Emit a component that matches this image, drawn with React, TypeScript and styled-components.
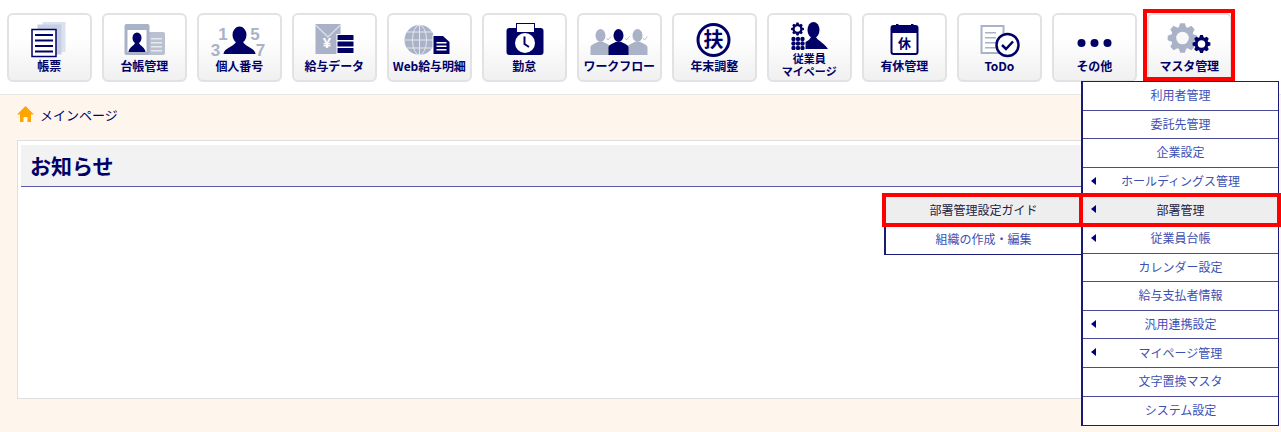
import React from "react";
import styled, { createGlobalStyle } from "styled-components";

const NAVY = "#000066";
const GREY = "#a9b2c6";

const GlobalStyle = createGlobalStyle`
    html, body {
        margin: 0;
        padding: 0;
        background: #fff;
        font-family: "Noto Sans CJK JP", "Liberation Sans", sans-serif;
    }
`

const Page = styled.div`
    position: relative;
    width: 1281px;
    height: 432px;
    overflow: hidden;
    display: flex;
    flex-direction: column;
`

const Toolbar = styled.nav`
    height: 95px;
    box-sizing: border-box;
    padding: 13px 0 0 7px;
    display: flex;
    gap: 10.5px;
    background: #fff;
    border-bottom: 1px solid #e8e4e0;
    flex-shrink: 0;
`

const ToolButton = styled.div`
    position: relative;
    width: 84.5px;
    height: 69px;
    box-sizing: border-box;
    padding-top: 5px;
    display: flex;
    flex-direction: column;
    align-items: center;
    border: 2px solid #e2e2e2;
    border-radius: 6px;
    background: linear-gradient(#fff 35%, #f0f0f0);
`

const ToolLabel = styled.div<{ $small?: boolean }>`
    color: ${NAVY};
    font-weight: 700;
    white-space: pre-line;
    text-align: center;
    font-size: ${props => (props.$small ? "11px" : "12px")};
    line-height: 13px;
    letter-spacing: ${props => (props.$small ? "0" : "-0.1px")};
    margin-top: ${props => (props.$small ? "2px" : "-1px")};
`

const RedMark = styled.div<{ $top: number; $right: number; $bottom: number; $left: number }>`
    position: absolute;
    top: ${props => props.$top}px;
    left: ${props => props.$left}px;
    right: ${props => props.$right}px;
    bottom: ${props => props.$bottom}px;
    border: 4px solid #f00;
    pointer-events: none;
    z-index: 3;
`

const Content = styled.main`
    flex: 1;
    background: #fef6ed;
    padding: 0 17px 33px;
    display: flex;
    flex-direction: column;
`

const Breadcrumb = styled.div`
    height: 39px;
    margin-bottom: 6px;
    display: flex;
    align-items: center;
    gap: 6px;
    color: ${NAVY};
    font-size: 13px;
`

const NoticeCard = styled.section`
    flex: 1;
    box-sizing: border-box;
    background: #fff;
    border: 1px solid #dfdfdf;
    padding: 4px 3px;
`

const NoticeTitle = styled.h2`
    margin: 0;
    height: 42px;
    box-sizing: border-box;
    padding: 0 0 2px 9px;
    display: flex;
    align-items: center;
    background: #f2f2f2;
    border-bottom: 1px solid #5c5cab;
    color: ${NAVY};
    font-size: 21px;
    font-weight: 700;
`

const Menu = styled.ul<{ $sub?: boolean }>`
    list-style: none;
    margin: 0;
    padding: 0;
    background: #fff;
    box-sizing: border-box;
    position: absolute;
    z-index: 2;
    width: ${props => (props.$sub ? "197px" : "198px")};
    border-left: 2px solid #1a1a78;
    border-right: ${props => (props.$sub ? "0" : "1px solid #1a1a78")};
    border-top: ${props => (props.$sub ? "0" : "1px solid #1a1a78")};
    border-bottom: 1px solid #1a1a78;
    ${props => (props.$sub ? "top: 0; right: calc(100% + 2px);" : "top: 81px; left: 1081px;")}
`

const MenuRow = styled.li<{ $active?: boolean }>`
    position: relative;
    height: 28.6px;
    box-sizing: border-box;
    padding-bottom: 2px;
    display: flex;
    align-items: center;
    justify-content: center;
    font-size: 12px;
    color: ${props => (props.$active ? "#222244" : "#3c50b4")};
    background: ${props => (props.$active ? "#eeeeee" : "#fff")};
    &:not(:last-child) {
        border-bottom: 1px solid #4a4a98;
    }
`

const Caret = styled.span`
    position: absolute;
    left: 8px;
    top: 50%;
    margin-top: -5px;
    width: 0;
    height: 0;
    border-top: 4px solid transparent;
    border-bottom: 4px solid transparent;
    border-right: 5px solid #000080;
`

const Gear: React.FC<{ cx: number; cy: number; r: number; teeth: number; fill: string; hole: string }> = props => {
    const points: string[] = [];
    const inner = props.r * 0.76;
    const step = (Math.PI * 2) / props.teeth;
    for (let i = 0; i < props.teeth; i++) {
        const a = i * step;
        const at = (rad: number, off: number) =>
            `${(props.cx + rad * Math.cos(a + off)).toFixed(2)},${(props.cy + rad * Math.sin(a + off)).toFixed(2)}`;
        points.push(at(inner, -step * 0.42), at(props.r, -step * 0.2), at(props.r, step * 0.2), at(inner, step * 0.42));
    }
    return (<>
        <polygon points={points.join(" ")} fill={props.fill}/>
        <circle cx={props.cx} cy={props.cy} r={props.r * 0.42} fill={props.hole}/>
    </>)
}

const Person: React.FC<{ x: number; fill: string }> = props => (<g fill={props.fill}>
    <ellipse cx={props.x} cy={15.5} rx={5} ry={6.5}/>
    <path d={`M${props.x - 10} 35 V27.5 C${props.x - 10} 24.5 ${props.x - 6} 24 ${props.x - 3} 22 H${props.x + 3} C${props.x + 6} 24 ${props.x + 10} 24.5 ${props.x + 10} 27.5 V35Z`}/>
</g>)

const Icon = styled.svg`
    display: block;
    flex-shrink: 0;
`

const Glyph: React.FC<{ h?: number; children: React.ReactNode }> = ({ h = 40, children }) => (
    <Icon width={60} height={h} viewBox={`0 0 60 ${h}`}>{children}</Icon>
)

const icons: Record<string, React.ReactNode> = {
    report: <Glyph>
        <rect x={23.5} y={2} width={23} height={30} fill="#dbe1ee"/>
        <rect x={18.5} y={4.5} width={24} height={30} fill="#c6cfe3"/>
        <rect x={13} y={9.5} width={24} height={27} fill="#fff" stroke={NAVY} strokeWidth={1.5}/>
        {[14, 19.5, 25, 30.5].map(y => <rect key={y} x={16} y={y} width={18} height={2} fill={NAVY}/>)}
    </Glyph>,
    ledger: <Glyph>
        <rect x={33} y={12} width={18} height={23} rx={2} fill="#b9c0d0"/>
        {[18, 22, 26, 30].map(y => <rect key={y} x={37} y={y} width={11} height={1.5} fill="#e6e9f0"/>)}
        <rect x={10.5} y={4} width={25} height={31} rx={2} fill={GREY}/>
        <rect x={13.5} y={10} width={19} height={22} fill="#fff"/>
        <ellipse cx={23} cy={18} rx={4.5} ry={5.5} fill={NAVY}/>
        <path d="M14.5 32 C15 27 20 26 21 23 H25 C26 26 31 27 31.5 32Z" fill={NAVY}/>
    </Glyph>,
    number: <Glyph>
        <ellipse cx={30.5} cy={15} rx={7} ry={8.5} fill={NAVY}/>
        <path d="M14.5 34 C15 28 24 27 27 22 H34 C37 27 46 28 46.5 34Z" fill={NAVY}/>
        <g fill={GREY} fontSize={17} fontWeight={700} textAnchor="middle" fontFamily="Liberation Sans">
            <text x={14} y={20}>1</text>
            <text x={46} y={20}>5</text>
            <text x={6.5} y={36}>3</text>
            <text x={51.5} y={36}>7</text>
        </g>
    </Glyph>,
    salary: <Glyph>
        <rect x={11.5} y={4} width={25} height={30} fill={GREY}/>
        <path d="M11.5 5 L24 17 L36.5 5" fill="none" stroke="#d8dce6" strokeWidth={1.5}/>
        <text x={23} y={28} fill="#fff" fontSize={15} fontWeight={700} textAnchor="middle" fontFamily="Liberation Sans">¥</text>
        <rect x={32.5} y={14} width={18} height={21} fill="#fff"/>
        {[15, 21.5, 28].map(y => <rect key={y} x={33.5} y={y} width={16} height={5} rx={0.5} fill={NAVY}/>)}
    </Glyph>,
    web: <Glyph>
        <circle cx={20.5} cy={20} r={15} fill={GREY}/>
        <g fill="none" stroke="#e4e7ee" strokeWidth={1}>
            <ellipse cx={20.5} cy={20} rx={7} ry={15}/>
            <path d="M20.5 5 V35 M5.5 20 H35.5 M8 12 H33 M8 28 H33"/>
        </g>
        <path d="M33.5 15 H44 L51 21 V35 H33.5Z" fill="#fff"/>
        <path d="M34.5 16 H44 L50.5 22 V34 H34.5Z" fill={NAVY}/>
        {[22, 25.5, 29].map(y => <rect key={y} x={37.5} y={y} width={10} height={1.5} fill="#fff"/>)}
    </Glyph>,
    attendance: <Glyph>
        <rect x={12.5} y={8} width={37} height={27} rx={3} fill={NAVY}/>
        <rect x={22.5} y={3.5} width={18} height={9} fill="#fff" stroke={NAVY} strokeWidth={1}/>
        <circle cx={31} cy={23} r={10} fill="#fff"/>
        <path d="M30.5 16.5 V24 L35 27" fill="none" stroke={NAVY} strokeWidth={2}/>
    </Glyph>,
    workflow: <Glyph>
        <Person x={11.5} fill={GREY}/>
        <Person x={48.5} fill={GREY}/>
        <Person x={29.5} fill={NAVY}/>
        <g fill="none" stroke="#bcc4d4" strokeWidth={1}>
            <path d="M17.5 18 L19 20 L22 16.5 M36 18 L37.5 20 L40.5 16.5 M54 18 L55.5 20 L58.5 16.5"/>
        </g>
    </Glyph>,
    yearEnd: <Glyph>
        <circle cx={29.5} cy={20} r={15.5} fill="#fff" stroke={NAVY} strokeWidth={3}/>
        <text x={29.5} y={27} fill={NAVY} fontSize={20} fontWeight={700} textAnchor="middle">扶</text>
    </Glyph>,
    myPage: <Glyph h={30}>
        <Gear cx={18.5} cy={9} r={6.5} teeth={8} fill={NAVY} hole="#fff"/>
        {[19, 23.5, 28].map(y => [14.5, 19, 23.5].map(x => <circle key={`${x}-${y}`} cx={x} cy={y} r={2.2} fill={NAVY}/>))}
        <ellipse cx={34.5} cy={10} rx={6} ry={8} fill={NAVY}/>
        <path d="M26.5 29 V22 C29 21 31 19 32 17 H37 C38 20 44 22 49 29Z" fill={NAVY}/>
    </Glyph>,
    leave: <Glyph>
        <rect x={17.5} y={6} width={26} height={28} rx={2} fill="#fff" stroke={NAVY} strokeWidth={2}/>
        <rect x={17} y={6} width={27} height={7} fill={NAVY}/>
        <rect x={22} y={4} width={2.5} height={4} fill={NAVY}/>
        <rect x={37} y={4} width={2.5} height={4} fill={NAVY}/>
        <text x={30.5} y={28} fill={NAVY} fontSize={13} fontWeight={700} textAnchor="middle">休</text>
    </Glyph>,
    todo: <Glyph>
        <rect x={12.5} y={6} width={22} height={27} fill="#fff" stroke={GREY} strokeWidth={2}/>
        {[12, 17, 22, 27].map(y => <rect key={y} x={16} y={y} width={11} height={1.5} fill={GREY}/>)}
        <circle cx={38.5} cy={25} r={11} fill="#fff" stroke={NAVY} strokeWidth={2.5}/>
        <path d="M33 25 L37 29 L44 21.5" fill="none" stroke={NAVY} strokeWidth={2.5}/>
    </Glyph>,
    other: <Glyph>
        {[17.5, 30.5, 43.5].map(x => <circle key={x} cx={x} cy={23} r={4} fill={NAVY}/>)}
    </Glyph>,
    master: <Glyph>
        <Gear cx={23.5} cy={18} r={15} teeth={8} fill={GREY} hole="#f8f8f8"/>
        <Gear cx={42.5} cy={24} r={9} teeth={8} fill={NAVY} hole="#fff"/>
    </Glyph>,
};

const tools = [
    { key: "report", label: "帳票" },
    { key: "ledger", label: "台帳管理" },
    { key: "number", label: "個人番号" },
    { key: "salary", label: "給与データ" },
    { key: "web", label: "Web給与明細" },
    { key: "attendance", label: "勤怠" },
    { key: "workflow", label: "ワークフロー" },
    { key: "yearEnd", label: "年末調整" },
    { key: "myPage", label: "従業員\nマイページ", small: true },
    { key: "leave", label: "有休管理" },
    { key: "todo", label: "ToDo" },
    { key: "other", label: "その他" },
    { key: "master", label: "マスタ管理", marked: true },
];

const menuItems = [
    { label: "利用者管理" },
    { label: "委託先管理" },
    { label: "企業設定" },
    { label: "ホールディングス管理", caret: true },
    { label: "部署管理", caret: true, active: true },
    { label: "従業員台帳", caret: true },
    { label: "カレンダー設定" },
    { label: "給与支払者情報" },
    { label: "汎用連携設定", caret: true },
    { label: "マイページ管理", caret: true },
    { label: "文字置換マスタ" },
    { label: "システム設定" },
];

const App: React.FC = () => (<Page>
    <GlobalStyle/>
    <Toolbar>
        {tools.map(t => (<ToolButton key={t.key}>
            {icons[t.key]}
            <ToolLabel $small={t.small}>{t.label}</ToolLabel>
            {t.marked && <RedMark $top={-6} $right={-5} $bottom={-1} $left={-6}/>}
        </ToolButton>))}
    </Toolbar>
    <Content>
        <Breadcrumb>
            <svg width={17} height={17} viewBox="0 0 17 17">
                <path d="M8.5 0 L17 8.5 H14 V16 H10.5 V11 H6.5 V16 H3 V8.5 H0Z" fill="#ffa500"/>
            </svg>
            メインページ
        </Breadcrumb>
        <NoticeCard>
            <NoticeTitle>お知らせ</NoticeTitle>
        </NoticeCard>
    </Content>
    <Menu>
        {menuItems.map(m => (<MenuRow key={m.label} $active={m.active}>
            {m.caret && <Caret/>}
            {m.label}
            {m.active && <RedMark $top={-3} $right={-3} $bottom={-3} $left={-4}/>}
            {m.active && <Menu $sub>
                <MenuRow $active>部署管理設定ガイド<RedMark $top={-3} $right={-2} $bottom={-3} $left={-4}/></MenuRow>
                <MenuRow>組織の作成・編集</MenuRow>
            </Menu>}
        </MenuRow>))}
    </Menu>
</Page>)

export default App
